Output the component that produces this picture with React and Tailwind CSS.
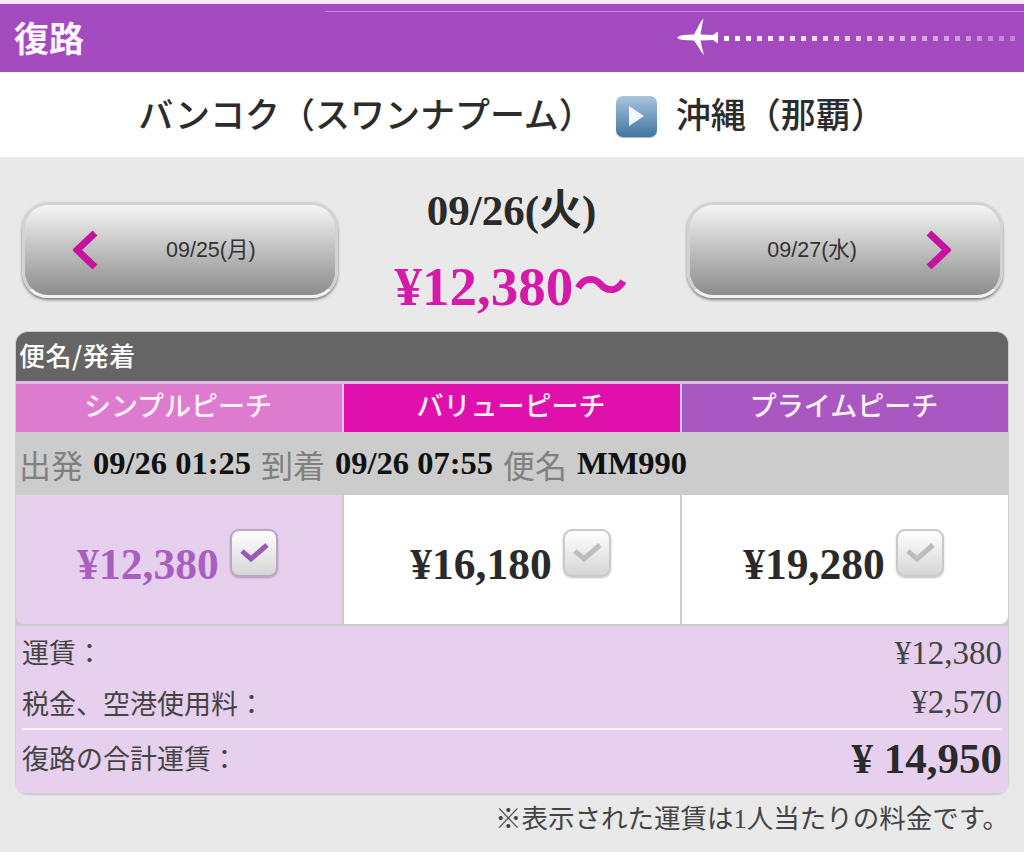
const jp = "font-['Noto_Sans_CJK_JP','Noto_Sans',sans-serif]";
const serif = "font-['Liberation_Serif','Noto_Sans_CJK_JP',serif]";
const arial = "font-['Liberation_Sans','Noto_Sans_CJK_JP',sans-serif]";

const dots = Array.from({ length: 27 }, (_, i) => i);

function Plane() {
  return (
    <svg width="44" height="40" viewBox="0 0 44 40" className="shrink-0">
      <path
        d="M0 19.5 Q2 17.5 6 17 L17 16.5 L23 5 Q25 1.5 26.5 0.5 Q25 7 23.5 16.5 L36 17 L40 14 L41 14 L41 25 L40 25 L36 22 L23.5 22.5 Q25 30 27 37 Q24 34 22 30 L17 22.5 L6 22 Q2 21.5 0 19.5 Z"
        fill="#fff"
      />
    </svg>
  );
}

function Chevron({ right }) {
  return (
    <svg width="26" height="40" viewBox="0 0 26 40" className="shrink-0">
      <path
        d={right ? "M4 3 L22 20 L4 37" : "M22 3 L4 20 L22 37"}
        fill="none"
        stroke="#c5129f"
        strokeWidth="7"
      />
    </svg>
  );
}

function DayButton({ label, right }) {
  return (
    <button
      type="button"
      className={`flex h-[96px] w-[316px] items-center rounded-[26px] border-[3px] border-[#d2d2d2] border-b-[#f0f0f0] bg-gradient-to-b from-[#f6f6f6] to-[#8c8c8c] shadow-[0_2px_3px_rgba(0,0,0,0.45)] ${
        right ? "justify-end pr-[49px]" : "pl-[48px]"
      }`}
    >
      {right ? (
        <>
          <span className={`${arial} mr-[68px] text-[21.5px] text-[#333]`}>{label}</span>
          <Chevron right />
        </>
      ) : (
        <>
          <Chevron />
          <span className={`${arial} ml-[67px] text-[21.5px] text-[#333]`}>{label}</span>
        </>
      )}
    </button>
  );
}

function CheckBox({ active }) {
  return (
    <span
      className={`mb-[13px] ml-[11px] flex h-[48px] w-[48px] items-center justify-center rounded-[9px] border-2 bg-gradient-to-b from-white to-[#d6d6d6] shadow-[0_1px_2px_rgba(0,0,0,0.25)] ${
        active ? "border-[#b9a6c4]" : "border-[#c9c9c9]"
      }`}
    >
      <svg width="32" height="24" viewBox="0 0 32 24">
        <path
          d="M4 10 L13 18 L29 4"
          fill="none"
          stroke={active ? "#9b59b6" : "#bdbdbd"}
          strokeWidth="5"
        />
      </svg>
    </span>
  );
}

function FareCell({ price, active, className }) {
  return (
    <div className={`flex items-center justify-center pr-[3px] ${active ? "bg-[#e7cfee]" : "bg-white"} ${className}`}>
      <span className={`${serif} mt-[10px] text-[43.5px] leading-none font-bold ${active ? "text-[#a75fc0]" : "text-[#2a2a2a]"}`}>
        {price}
      </span>
      <CheckBox active={active} />
    </div>
  );
}

export default function App() {
  return (
    <div className="h-[852px] w-[1024px] overflow-hidden bg-[#e9e9e9]">
      <div className="h-[4px] bg-[#f3eaf5]" />

      <div className="relative flex h-[68px] items-center justify-between bg-[#a44abf] pl-[14px]">
        <div className="absolute top-[7px] right-0 left-[325px] h-[1px] bg-[#cf7de4]" />
        <h1 className={`${jp} mb-[4px] text-[35px] leading-none font-bold text-[#fdf6ff]`}>復路</h1>
        <div className="flex items-center pr-[9px]">
          <Plane />
          <div className="ml-[3px] flex gap-[6px]">
            {dots.map((d) => (
              <span
                key={d}
                className="h-[5px] w-[5px] bg-white"
                style={{ opacity: 1 - d * 0.026 }}
              />
            ))}
          </div>
        </div>
      </div>

      <div className="flex h-[85px] items-center justify-center bg-white pb-[4px]">
        <span className={`${jp} text-[35px] leading-none font-medium text-[#2c2c2c]`}>バンコク（スワンナプーム）</span>
        <span className="mt-[7px] mr-[19px] ml-[22px] flex h-[41px] w-[41px] items-center justify-center rounded-[7px] bg-gradient-to-b from-[#a9c6de] to-[#41749f] shadow-[0_1px_1px_rgba(0,0,0,0.3)]">
          <svg width="20" height="24" viewBox="0 0 20 24">
            <path d="M3 2 L18 12 L3 22 Z" fill="#f4f7fa" />
          </svg>
        </span>
        <span className={`${jp} text-[35px] leading-none font-medium text-[#2c2c2c]`}>沖縄（那覇）</span>
      </div>

      <div className="flex items-start justify-between pt-[45px] pr-[21px] pl-[22px]">
        <DayButton label="09/25(月)" />
        <div className="flex flex-col items-center pr-[2px]">
          <div className={`${serif} mt-[-17px] text-[43px] leading-[52px] font-bold text-[#2a2a2a]`}>09/26(火)</div>
          <div className={`${serif} mt-[21px] mb-[1px] text-[55px] leading-[58px] font-bold text-[#d51aa9]`}>¥12,380〜</div>
        </div>
        <DayButton label="09/27(水)" right />
      </div>

      <div className="mt-[15px] ml-[16px] w-[992px] rounded-[12px] bg-[#cccccc] shadow-[0_0_0_1px_#d0d0d0,0_2px_2px_rgba(0,0,0,0.15)]">
        <div className={`${jp} flex h-[49px] items-center rounded-t-[12px] bg-[#656565] pb-[5px] pl-[3px] text-[26px] font-medium tracking-[0.5px] text-white`}>
          便名/発着
        </div>
        <div className={`${jp} grid h-[51px] grid-cols-[326px_336px_1fr] gap-x-[2px] border-t-[3px] border-[#e2b7e4] bg-[#e8c5ea] text-[27px] font-medium text-[#fdf0fb]`}>
          <div className="flex items-center justify-center bg-[#dd7ccf] pr-[2px] pb-[5px]">シンプルピーチ</div>
          <div className="flex items-center justify-center bg-[#e010ac] pr-[2px] pb-[5px]">バリューピーチ</div>
          <div className="flex items-center justify-center bg-[#a958c2] pr-[2px] pb-[5px]">プライムピーチ</div>
        </div>
        <div className="flex h-[63px] items-center gap-[10px] bg-[#cccccc] pl-[3px] text-[32px] leading-none">
          <span className={`${jp} text-[#808080]`}>出発</span>
          <span className={`${serif} text-[32.5px] font-bold text-[#111]`}>09/26 01:25</span>
          <span className={`${jp} text-[#808080]`}>到着</span>
          <span className={`${serif} text-[32.5px] font-bold text-[#111]`}>09/26 07:55</span>
          <span className={`${jp} text-[#808080]`}>便名</span>
          <span className={`${serif} text-[32.5px] font-bold text-[#111]`}>MM990</span>
        </div>
        <div className="grid h-[129px] grid-cols-[326px_336px_1fr] gap-x-[2px]">
          <FareCell price="¥12,380" active className="rounded-bl-[8px]" />
          <FareCell price="¥16,180" />
          <FareCell price="¥19,280" className="rounded-br-[8px]" />
        </div>
        <div className="mt-[2px] rounded-b-[8px] bg-[#e7cfee] pr-[6px] pb-[7px] pl-[6px] text-[#444]">
          <div className="flex h-[52px] items-center justify-between">
            <span className={`${jp} text-[27px]`}>運賃：</span>
            <span className={`${serif} mt-[3px] text-[33px]`}>¥12,380</span>
          </div>
          <div className="flex h-[50px] items-center justify-between">
            <span className={`${jp} text-[27px]`}>税金、空港使用料：</span>
            <span className={`${serif} text-[33px]`}>¥2,570</span>
          </div>
          <div className="h-[2px] bg-[#fbf5fc]" />
          <div className="flex h-[56px] items-center justify-between">
            <span className={`${jp} text-[27px]`}>復路の合計運賃：</span>
            <span className={`${serif} mt-[3px] text-[43px] font-bold text-[#2a2a2a]`}>¥ 14,950</span>
          </div>
        </div>
      </div>

      <p className={`${jp} mt-[4px] pr-[15px] text-right text-[26.5px] leading-[40px] text-[#444]`}>
        ※表示された運賃は<span className={serif}>1</span>人当たりの料金です。
      </p>
    </div>
  );
}
